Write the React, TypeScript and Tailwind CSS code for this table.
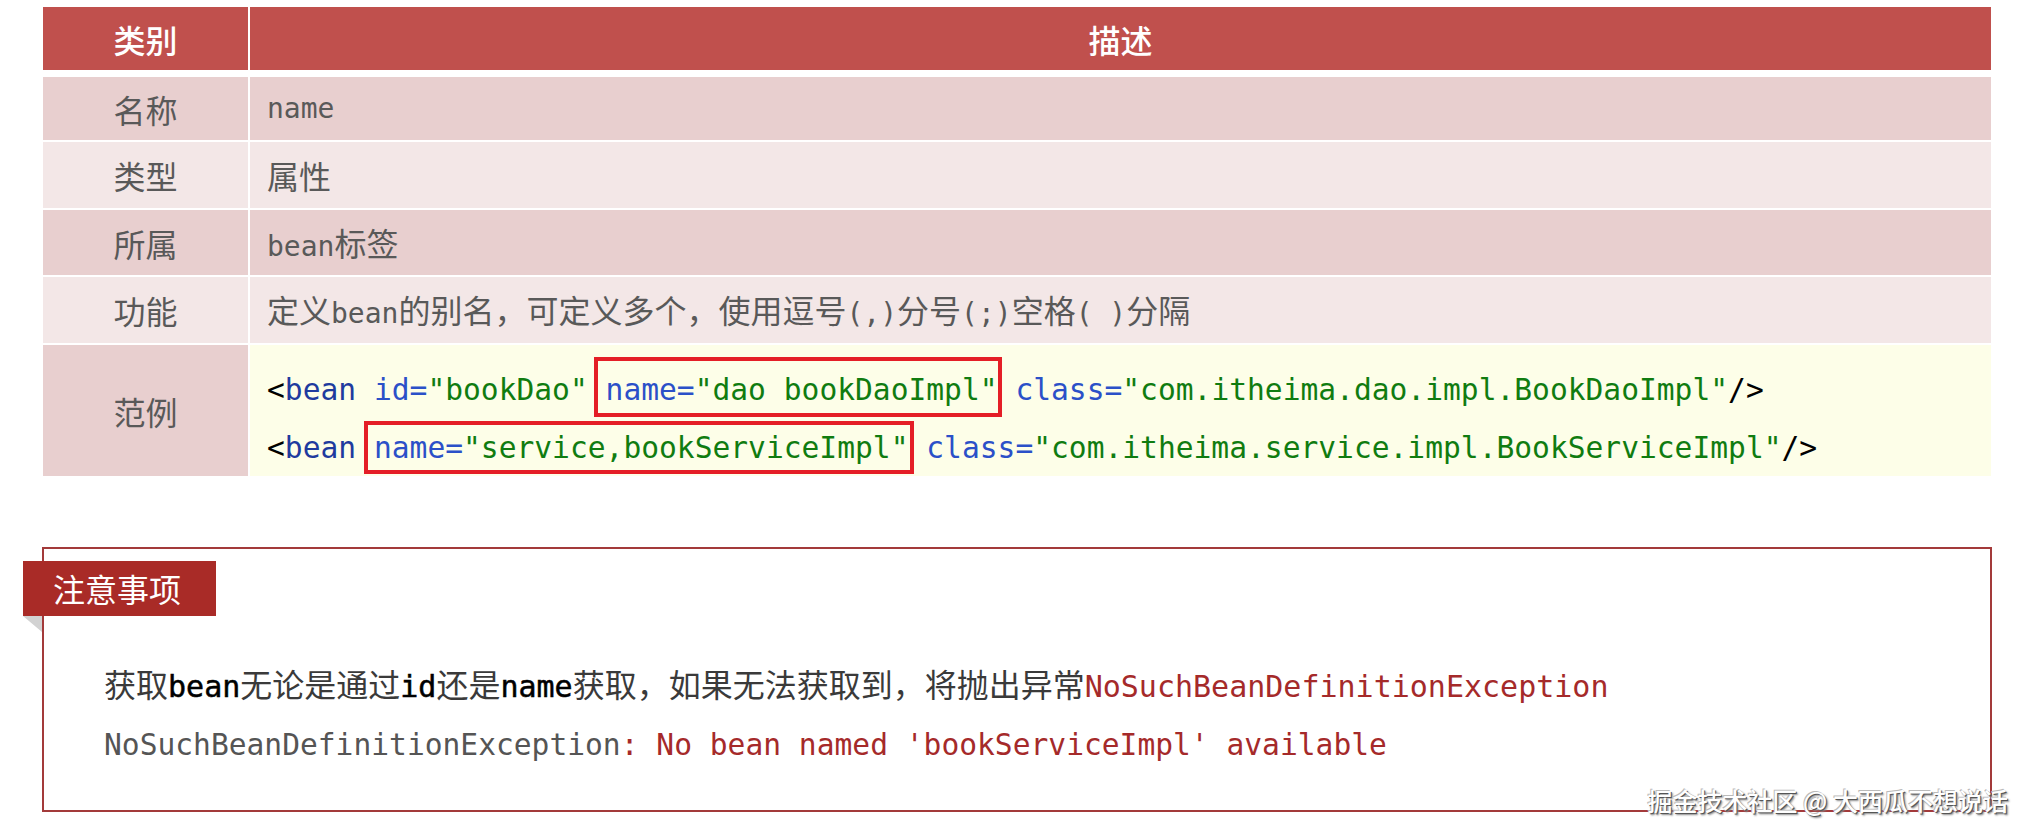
import React from 'react';

const CJK_RUN = /([\u2E80-\u9FFF\u3000-\u303F\uFF00-\uFFEF]+)/;

/**
 * 中英文混排：中文用黑体，英文用等宽
 */
function Mixed({ text, cjk, latin }: { text: string; cjk: string; latin: string }) {
  const parts = text.split(CJK_RUN).filter(Boolean);
  return (
    <>
      {parts.map((p, i) =>
        CJK_RUN.test(p) ? (
          <span key={i} className={cjk}>
            {p}
          </span>
        ) : (
          <span key={i} className={latin}>
            {p}
          </span>
        )
      )}
    </>
  );
}

const rows = [
  { label: '名称', content: 'name', dark: true, h: 'h-[63px]' },
  { label: '类型', content: '属性', dark: false, h: 'h-[66px]' },
  { label: '所属', content: 'bean标签', dark: true, h: 'h-[65px]' },
  {
    label: '功能',
    content: '定义bean的别名，可定义多个，使用逗号(,)分号(;)空格( )分隔',
    dark: false,
    h: 'h-[66px]',
  },
];

const cellCjk = "font-['Noto_Sans_CJK_SC',sans-serif] text-[32px]";
const cellLatin = "font-['DejaVu_Sans_Mono','Noto_Sans_CJK_SC',monospace] text-[28px]";
const noteCjk = "font-['Noto_Sans_CJK_SC',sans-serif] text-[32px]";
const keyword = 'text-black [-webkit-text-stroke:0.5px_#000]';

export default function App() {
  return (
    <div className="relative w-[2034px] h-[837px] overflow-hidden bg-white">
      {/* Table */}
      <div className="ml-[43px] mt-[7px] w-[1948px]">
        <div className="flex h-[63px] bg-[#C0504D] text-white font-['Noto_Sans_CJK_SC',sans-serif] text-[32px] font-medium">
          <div className="w-[205px] flex items-center justify-center">类别</div>
          <div className="w-[2px] bg-white" />
          <div className="flex-1 flex items-center justify-center">描述</div>
        </div>

        <div className="mt-[7px] flex flex-col gap-[2px]">
          {rows.map((r) => (
            <div key={r.label} className={`flex ${r.h} text-[#595959]`}>
              <div
                className={`w-[205px] flex items-center justify-center ${cellCjk} ${
                  r.dark ? 'bg-[#E8CFCF]' : 'bg-[#F3E7E7]'
                }`}
              >
                {r.label}
              </div>
              <div
                className={`ml-[2px] flex-1 flex items-center pl-[17px] whitespace-pre ${
                  r.dark ? 'bg-[#E8CFCF]' : 'bg-[#F3E7E7]'
                }`}
              >
                <span>
                  <Mixed text={r.content} cjk={cellCjk} latin={cellLatin} />
                </span>
              </div>
            </div>
          ))}

          {/* 范例 */}
          <div className="flex h-[131px]">
            <div className={`w-[205px] flex items-center justify-center bg-[#E8CFCF] text-[#595959] ${cellCjk}`}>
              范例
            </div>
            <div className="ml-[2px] flex-1 bg-[#FDFEE8] pt-[16px] pl-[17px] whitespace-pre font-['DejaVu_Sans_Mono',monospace] text-[29.6px] leading-[58px]">
              <div>
                <span className="text-black">&lt;</span>
                <span className="text-[#1F3B9E]">bean</span>{' '}
                <span className="text-[#2B50C8]">id=</span>
                <span className="text-[#107C10]">"bookDao"</span>{' '}
                <span className="border-4 border-[#E41E26] -ml-[12px] -mr-[4px] pl-[8px] pt-[12px] pb-[6px]">
                  <span className="text-[#2B50C8]">name=</span>
                  <span className="text-[#107C10]">"dao bookDaoImpl"</span>
                </span>{' '}
                <span className="text-[#2B50C8]">class=</span>
                <span className="text-[#107C10]">"com.itheima.dao.impl.BookDaoImpl"</span>
                <span className="text-black">/&gt;</span>
              </div>
              <div>
                <span className="text-black">&lt;</span>
                <span className="text-[#1F3B9E]">bean</span>{' '}
                <span className="border-4 border-[#E41E26] -ml-[10px] -mr-[6px] pl-[6px] pr-[2px] pt-[6px] pb-[5px]">
                  <span className="text-[#2B50C8]">name=</span>
                  <span className="text-[#107C10]">"service,bookServiceImpl"</span>
                </span>{' '}
                <span className="text-[#2B50C8]">class=</span>
                <span className="text-[#107C10]">"com.itheima.service.impl.BookServiceImpl"</span>
                <span className="text-black">/&gt;</span>
              </div>
            </div>
          </div>
        </div>
      </div>

      {/* 注意事项 */}
      <div className="ml-[42px] mt-[71px] w-[1950px] h-[265px] border-2 border-[#A33A3A]">
        <div className="relative -ml-[21px] mt-[12px] w-[193px] h-[55px] bg-[#A92B27] pl-[30px] text-white font-['Noto_Sans_CJK_SC',sans-serif] text-[32px] leading-[55px]">
          注意事项
          <svg className="absolute left-0 top-[55px]" width="19" height="16" viewBox="0 0 19 16">
            <polygon points="0,0 19,0 19,16" fill="#D2D2D2" />
          </svg>
        </div>

        <div className="mt-[38px] pl-[60px] whitespace-pre text-[#3A3A3A] leading-[58px] font-['DejaVu_Sans_Mono',monospace] text-[30px]">
          <div>
            <span className={noteCjk}>获取</span>
            <span className={keyword}>bean</span>
            <span className={noteCjk}>无论是通过</span>
            <span className={keyword}>id</span>
            <span className={noteCjk}>还是</span>
            <span className={keyword}>name</span>
            <span className={noteCjk}>获取，如果无法获取到，将抛出异常</span>
            <span className="text-[#A52A2A]">NoSuchBeanDefinitionException</span>
          </div>
          <div className="text-[29.6px]">
            <span className="text-[#555]">NoSuchBeanDefinitionException</span>
            <span className="text-[#A52A2A]">: No bean named 'bookServiceImpl' available</span>
          </div>
        </div>
      </div>

      {/* watermark */}
      <div className="absolute right-[26px] top-[782px] leading-[36px] text-[25px] font-medium text-white font-['Noto_Sans_CJK_SC',sans-serif] [text-shadow:1px_1px_0_#555,-1px_-1px_0_#bbb,2px_2px_2px_#888]">
        掘金技术社区 @ 大西瓜不想说话
      </div>
    </div>
  );
}
